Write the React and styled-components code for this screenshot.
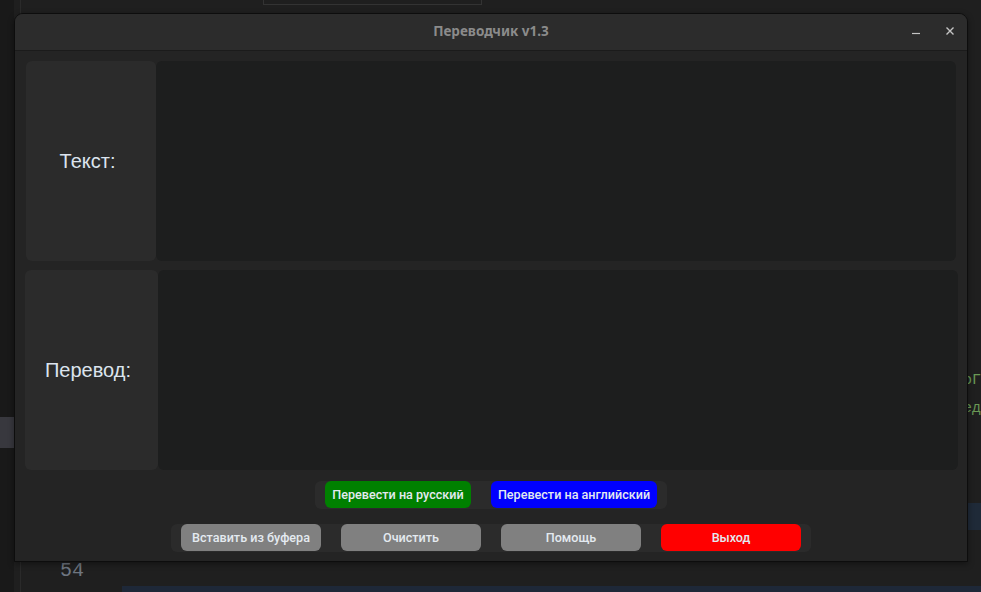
import React from "react"
import styled, { createGlobalStyle } from "styled-components"

const GlobalStyle = createGlobalStyle`
  html, body {
    margin: 0;
    padding: 0;
    background: #1f1f1f;
    overflow: hidden;
  }
`

const App = () => {
  return (
    <>
      <GlobalStyle />
      <Desktop>
        <ActivityStrip>
          <ActiveMark />
        </ActivityStrip>
        <Editor>
          <TabStrip>
            <Tab />
          </TabStrip>
          <Lines>
            <CodeLine>оГ</CodeLine>
            <CodeLine>ед</CodeLine>
            <Spacer />
            <HighlightLine />
            <LineNumber>54</LineNumber>
          </Lines>
          <StatusBar />
        </Editor>

        <Window>
          <TitleBar>
            <span />
            <Title>Переводчик v1.3</Title>
            <Controls>
              <ControlButton aria-label="minimize">
                <svg width="10" height="10" viewBox="0 0 10 10">
                  <line x1="1" y1="7.5" x2="9" y2="7.5" stroke="#c4c4c4" strokeWidth="1.2" />
                </svg>
              </ControlButton>
              <ControlButton aria-label="close">
                <svg width="10" height="10" viewBox="0 0 10 10">
                  <path d="M1.5 1.5 L8.5 8.5 M8.5 1.5 L1.5 8.5" stroke="#c4c4c4" strokeWidth="1.4" />
                </svg>
              </ControlButton>
            </Controls>
          </TitleBar>

          <Body>
            <FieldRow $offset={11}>
              <FieldLabel $width={130}>Текст:</FieldLabel>
              <TextArea />
            </FieldRow>
            <FieldRow $offset={10} $gap={9}>
              <FieldLabel $width={133}>Перевод:</FieldLabel>
              <TextArea />
            </FieldRow>

            <ButtonGroup $top={11}>
              <ActionButton $bg="#008000" $width={146}>Перевести на русский</ActionButton>
              <ActionButton $bg="#0000ff" $width={166}>Перевести на английский</ActionButton>
            </ButtonGroup>

            <ButtonGroup $top={15}>
              <ActionButton $bg="#808080">Вставить из буфера</ActionButton>
              <ActionButton $bg="#808080">Очистить</ActionButton>
              <ActionButton $bg="#808080">Помощь</ActionButton>
              <ActionButton $bg="#ff0000">Выход</ActionButton>
            </ButtonGroup>
          </Body>
        </Window>
      </Desktop>
    </>
  )
}

/* editor in the background */

const Desktop = styled.div`
  position: relative;
  width: 981px;
  height: 592px;
  display: flex;
  background: #1f1f1f;
  overflow: hidden;
`

const ActivityStrip = styled.div`
  width: 14px;
  flex-shrink: 0;
  background: #191919;
  padding-top: 417px;
  box-sizing: border-box;
`

const ActiveMark = styled.div`
  height: 31px;
  background: #38383e;
`

const Editor = styled.div`
  flex: 1;
  margin-left: 6px;
  border-left: 1px solid #2a2a2a;
  display: flex;
  flex-direction: column;
  min-width: 0;
`

const TabStrip = styled.div`
  height: 13px;
  flex-shrink: 0;
  padding-left: 242px;
  box-sizing: border-box;
`

const Tab = styled.div`
  width: 217px;
  height: 4px;
  border: 1px solid #333;
  border-top: none;
`

const Lines = styled.div`
  flex: 1;
  display: flex;
  flex-direction: column;
  padding-top: 354px;
`

const CodeLine = styled.div`
  height: 28px;
  line-height: 28px;
  padding-left: 942px;
  white-space: nowrap;
  font-family: "Liberation Mono", monospace;
  font-size: 15px;
  color: #6a9955;
`

const Spacer = styled.div`
  height: 80px;
`

const HighlightLine = styled.div`
  height: 27px;
  background: #1f2a38;
  margin-bottom: 27px;
`

const LineNumber = styled.div`
  height: 28px;
  line-height: 28px;
  padding-left: 39px;
  font-family: "Liberation Mono", monospace;
  font-size: 20px;
  color: #6e7681;
`

const StatusBar = styled.div`
  height: 6px;
  margin-left: 101px;
  background: #1e2838;
`

/* translator window */

const Window = styled.div`
  position: absolute;
  left: 14px;
  top: 13px;
  width: 954px;
  height: 549px;
  box-sizing: border-box;
  background: #242424;
  border: 1px solid #0d0d0d;
  border-radius: 9px 9px 0 0;
  display: flex;
  flex-direction: column;
  box-shadow: 0 2px 6px rgba(0, 0, 0, 0.4);
`

const TitleBar = styled.div`
  height: 37px;
  flex-shrink: 0;
  box-sizing: border-box;
  padding-bottom: 3px;
  display: grid;
  grid-template-columns: 1fr auto 1fr;
  align-items: center;
  background: #2c2c2c;
  border-bottom: 1px solid #1b1b1b;
  border-radius: 8px 8px 0 0;
`

const Title = styled.div`
  font-family: "Noto Sans", sans-serif;
  font-weight: 700;
  font-size: 13.5px;
  color: #8b8b8b;
`

const Controls = styled.div`
  display: flex;
  justify-content: flex-end;
  gap: 24px;
  padding-right: 12px;
`

const ControlButton = styled.div`
  width: 10px;
  height: 10px;
  display: flex;
`

const Body = styled.div`
  display: flex;
  flex-direction: column;
  padding-top: 10px;
`

const FieldRow = styled.div`
  display: flex;
  height: 200px;
  margin-left: ${({ $offset }) => $offset}px;
  margin-top: ${({ $gap }) => $gap || 0}px;
`

const FieldLabel = styled.div`
  width: ${({ $width }) => $width}px;
  flex-shrink: 0;
  display: flex;
  align-items: center;
  justify-content: center;
  padding-right: 7px;
  box-sizing: border-box;
  background: #2b2b2b;
  border-radius: 6px;
  font-family: "Liberation Sans", Arial, sans-serif;
  font-size: 20px;
  color: #dce4ee;
`

const TextArea = styled.div`
  width: 800px;
  background: #1d1e1e;
  border-radius: 6px;
`

const ButtonGroup = styled.div`
  align-self: center;
  display: flex;
  gap: 20px;
  padding: 0 10px;
  height: 28px;
  margin-top: ${({ $top }) => $top}px;
  background: #2b2b2b;
  border-radius: 6px;
`

const ActionButton = styled.div`
  width: ${({ $width }) => $width || 140}px;
  height: 27px;
  display: flex;
  align-items: center;
  justify-content: center;
  background: ${({ $bg }) => $bg};
  border-radius: 6px;
  font-family: Roboto, "Noto Sans", sans-serif;
  font-weight: 500;
  font-size: 12.6px;
  color: #e4eaf0;
  white-space: nowrap;
`

export default App
